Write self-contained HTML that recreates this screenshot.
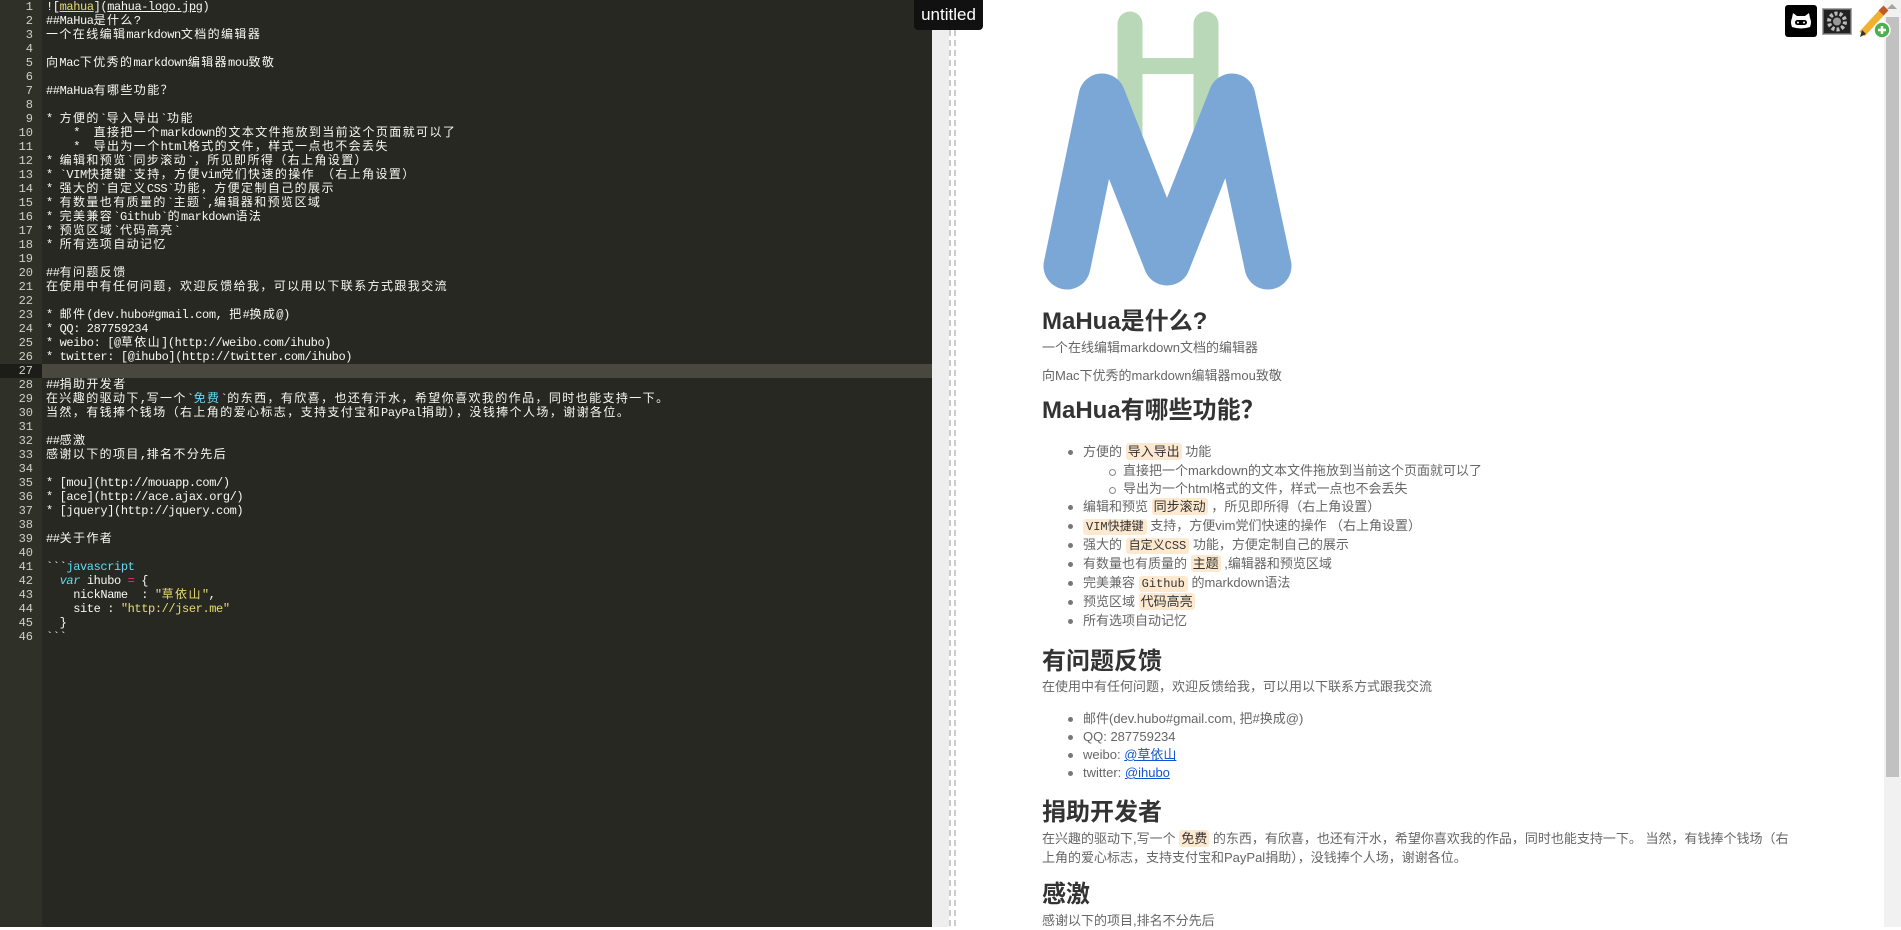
<!DOCTYPE html>
<html><head><meta charset="utf-8"><style>
*{margin:0;padding:0;box-sizing:border-box}
html,body{width:1901px;height:927px;overflow:hidden;background:#fff}
#ed{position:absolute;left:0;top:0;width:932px;height:927px;background:#272822}
#gut{position:absolute;left:0;top:0;width:42px;height:927px;background:#2f3129}
#nums{position:absolute;left:0;top:0;width:42px;}
#nums div{height:14px;text-align:right;padding-right:9px;color:#d0d0c8;font:12px/14px "Liberation Mono",monospace}
#code{position:absolute;left:46px;top:0;width:880px;font:12px/14px "Liberation Mono","Noto Sans CJK SC",monospace;color:#f8f8f2;letter-spacing:-0.4px}
#code div{height:14px;white-space:pre;overflow:hidden}
#code b{font-weight:normal;letter-spacing:1.4px}
.act{position:absolute;left:42px;top:364px;width:890px;height:14px;background:#49483e}
.actg{position:absolute;left:0;top:364px;width:42px;height:14px;background:#1c1d19}
.y{color:#e6db74}.u{text-decoration:underline}.c{color:#66d9ef}.p{color:#f92672}
#strip{position:absolute;left:932px;top:0;width:17px;height:927px;background:#eeeeee}
.dash{position:absolute;top:0;width:2px;height:927px;background:repeating-linear-gradient(#ccc 0px,#ccc 6px,#fff 6px,#fff 10px)}
#tab{position:absolute;left:914px;top:0;width:69px;height:30px;background:#111;border-radius:0 0 4px 4px;color:#fff;font:17px/30px "Liberation Sans",sans-serif;text-align:center}
#pv{position:absolute;left:1042px;top:0;width:780px;height:927px;font-family:"Liberation Sans","Noto Sans CJK SC",sans-serif;color:#666}
#pv h2{position:absolute;left:0;font-size:24px;line-height:28px;color:#333;font-weight:bold;white-space:nowrap}
#pv .t{position:absolute;left:0;font-size:13px;line-height:19px;white-space:nowrap}
#pv .li{position:absolute;font-size:13px;line-height:19px;white-space:nowrap}
.li:before{content:"";position:absolute;left:-15px;top:8px;width:5px;height:5px;border-radius:50%;background:#777}
.li.o:before{background:none;border:1px solid #888;left:-14px}
code{font-family:"Liberation Mono","Noto Sans CJK SC",monospace;font-size:12px;background:#fde9cf;color:#333;padding:1px 3px;border-radius:3px}
.hl{background:#fde9cf;color:#333;padding:1px 2px;border-radius:3px}
a{color:#1155cc;text-decoration:underline}
#sb{position:absolute;left:1884px;top:0;width:17px;height:927px;background:#f1f1f1}
#thumb{position:absolute;left:1886px;top:17px;width:13px;height:760px;background:#c1c1c1}
</style></head><body>
<div id="ed">
<div id="gut"></div>
<div class="actg"></div><div class="act"></div>
<div id="nums"><div>1</div><div>2</div><div>3</div><div>4</div><div>5</div><div>6</div><div>7</div><div>8</div><div>9</div><div>10</div><div>11</div><div>12</div><div>13</div><div>14</div><div>15</div><div>16</div><div>17</div><div>18</div><div>19</div><div>20</div><div>21</div><div>22</div><div>23</div><div>24</div><div>25</div><div>26</div><div>27</div><div>28</div><div>29</div><div>30</div><div>31</div><div>32</div><div>33</div><div>34</div><div>35</div><div>36</div><div>37</div><div>38</div><div>39</div><div>40</div><div>41</div><div>42</div><div>43</div><div>44</div><div>45</div><div>46</div></div>
<div id="code">
<div>![<span class="y u">mahua</span>](<span class="u">mahua-logo.jpg</span>)</div>
<div>##MaHua<b>是什么</b>?</div>
<div><b>一个在线编辑</b>markdown<b>文档的编辑器</b></div>
<div>&nbsp;</div>
<div><b>向</b>Mac<b>下优秀的</b>markdown<b>编辑器</b>mou<b>致敬</b></div>
<div>&nbsp;</div>
<div>##MaHua<b>有哪些功能？</b></div>
<div>&nbsp;</div>
<div>* <b>方便的</b>`<b>导入导出</b>`<b>功能</b></div>
<div>    *  <b>直接把一个</b>markdown<b>的文本文件拖放到当前这个页面就可以了</b></div>
<div>    *  <b>导出为一个</b>html<b>格式的文件，样式一点也不会丢失</b></div>
<div>* <b>编辑和预览</b>`<b>同步滚动</b>`<b>，所见即所得（右上角设置）</b></div>
<div>* `VIM<b>快捷键</b>`<b>支持，方便</b>vim<b>党们快速的操作</b> <b>（右上角设置）</b></div>
<div>* <b>强大的</b>`<b>自定义</b>CSS`<b>功能，方便定制自己的展示</b></div>
<div>* <b>有数量也有质量的</b>`<b>主题</b>`,<b>编辑器和预览区域</b></div>
<div>* <b>完美兼容</b>`Github`<b>的</b>markdown<b>语法</b></div>
<div>* <b>预览区域</b>`<b>代码高亮</b>`</div>
<div>* <b>所有选项自动记忆</b></div>
<div>&nbsp;</div>
<div>##<b>有问题反馈</b></div>
<div><b>在使用中有任何问题，欢迎反馈给我，可以用以下联系方式跟我交流</b></div>
<div>&nbsp;</div>
<div>* <b>邮件</b>(dev.hubo#gmail.com, <b>把</b>#<b>换成</b>@)</div>
<div>* QQ: 287759234</div>
<div>* weibo: [@<b>草依山</b>](http://weibo.com/ihubo)</div>
<div>* twitter: [@ihubo](http://twitter.com/ihubo)</div>
<div>&nbsp;</div>
<div>##<b>捐助开发者</b></div>
<div><b>在兴趣的驱动下</b>,<b>写一个</b>`<span class="c"><b>免费</b></span>`<b>的东西，有欣喜，也还有汗水，希望你喜欢我的作品，同时也能支持一下。</b></div>
<div><b>当然，有钱捧个钱场（右上角的爱心标志，支持支付宝和</b>PayPal<b>捐助），没钱捧个人场，谢谢各位。</b></div>
<div>&nbsp;</div>
<div>##<b>感激</b></div>
<div><b>感谢以下的项目</b>,<b>排名不分先后</b></div>
<div>&nbsp;</div>
<div>* [mou](http://mouapp.com/)</div>
<div>* [ace](http://ace.ajax.org/)</div>
<div>* [jquery](http://jquery.com)</div>
<div>&nbsp;</div>
<div>##<b>关于作者</b></div>
<div>&nbsp;</div>
<div>&#96;&#96;&#96;<span class="c">javascript</span></div>
<div>  <span class="c"><i>var</i></span> ihubo <span class="p">=</span> {</div>
<div>    nickName  : <span class="y">"<b>草依山</b>"</span>,</div>
<div>    site : <span class="y">"http://jser.me"</span></div>
<div>  }</div>
<div>&#96;&#96;&#96;</div>
</div>
</div>
<div id="strip"></div>
<div class="dash" style="left:949px"></div>
<div class="dash" style="left:954px"></div>
<div id="tab">untitled</div>

<svg style="position:absolute;left:1000px;top:0" width="320" height="300" viewBox="1000 0 320 300">
<g stroke="#b9d8b7" stroke-width="25" stroke-linecap="round" fill="none">
<line x1="1130" y1="24" x2="1130" y2="140"/><line x1="1206" y1="24" x2="1206" y2="140"/>
</g>
<rect x="1130" y="58" width="76" height="16" fill="#b9d8b7"/>
<polyline points="1067,266 1102,97 1167,262 1232,97 1268,266" fill="none" stroke="#7ba7d7" stroke-width="47" stroke-linecap="round" stroke-linejoin="round"/>
</svg>

<div id="pv">
<h2 style="top:308px">MaHua是什么?</h2>
<div class="t" style="top:338px">一个在线编辑markdown文档的编辑器</div>
<div class="t" style="top:366px">向Mac下优秀的markdown编辑器mou致敬</div>
<h2 style="top:397px">MaHua有哪些功能？</h2>
<div class="li" style="left:41px;top:442px">方便的 <span class="hl">导入导出</span> 功能</div>
<div class="li o" style="left:81px;top:461px">直接把一个markdown的文本文件拖放到当前这个页面就可以了</div>
<div class="li o" style="left:81px;top:479px">导出为一个html格式的文件，样式一点也不会丢失</div>
<div class="li" style="left:41px;top:497px">编辑和预览 <span class="hl">同步滚动</span> ，所见即所得（右上角设置）</div>
<div class="li" style="left:41px;top:516px"><code>VIM快捷键</code> 支持，方便vim党们快速的操作 （右上角设置）</div>
<div class="li" style="left:41px;top:535px">强大的 <code>自定义CSS</code> 功能，方便定制自己的展示</div>
<div class="li" style="left:41px;top:554px">有数量也有质量的 <span class="hl">主题</span> ,编辑器和预览区域</div>
<div class="li" style="left:41px;top:573px">完美兼容 <code>Github</code> 的markdown语法</div>
<div class="li" style="left:41px;top:592px">预览区域 <span class="hl">代码高亮</span></div>
<div class="li" style="left:41px;top:611px">所有选项自动记忆</div>
<h2 style="top:648px">有问题反馈</h2>
<div class="t" style="top:677px">在使用中有任何问题，欢迎反馈给我，可以用以下联系方式跟我交流</div>
<div class="li" style="left:41px;top:709px">邮件(dev.hubo#gmail.com, 把#换成@)</div>
<div class="li" style="left:41px;top:727px">QQ: 287759234</div>
<div class="li" style="left:41px;top:745px">weibo: <a>@草依山</a></div>
<div class="li" style="left:41px;top:763px">twitter: <a>@ihubo</a></div>
<h2 style="top:799px">捐助开发者</h2>
<div class="t" style="top:829px;white-space:normal;width:750px">在兴趣的驱动下,写一个 <span class="hl">免费</span> 的东西，有欣喜，也还有汗水，希望你喜欢我的作品，同时也能支持一下。 当然，有钱捧个钱场（右上角的爱心标志，支持支付宝和PayPal捐助），没钱捧个人场，谢谢各位。</div>
<h2 style="top:881px">感激</h2>
<div class="t" style="top:911px">感谢以下的项目,排名不分先后</div>
</div>

<div id="sb"></div><div id="thumb"></div>
<div style="position:absolute;left:1887px;top:4px;width:0;height:0;border-left:5px solid transparent;border-right:5px solid transparent;border-bottom:5px solid #a3a3a3"></div>
<div style="position:absolute;left:1785px;top:5px;width:32px;height:32px;background:#000;border-radius:3px"></div>
<svg style="position:absolute;left:1785px;top:5px" width="32" height="32"><path d="M7 13 L8 8 L12 11 L20 11 L24 8 L25 13 Q27 17 25 22 Q16 25 7 22 Q5 17 7 13Z" fill="#fff"/><rect x="10" y="15" width="12" height="5" rx="2.5" fill="#000"/><circle cx="13" cy="17.5" r="1" fill="#fff"/><circle cx="19" cy="17.5" r="1" fill="#fff"/></svg>
<svg style="position:absolute;left:1822px;top:8px" width="30" height="27"><rect x="0.5" y="0.5" width="29" height="26" fill="#666" stroke="#aaa"/><rect x="2" y="2" width="26" height="23" fill="#222"/><circle cx="15" cy="13.5" r="8" fill="none" stroke="#bbb" stroke-width="4" stroke-dasharray="3 2"/><circle cx="15" cy="13.5" r="4" fill="#999"/></svg>
<svg style="position:absolute;left:1858px;top:4px" width="34" height="34"><line x1="4" y1="30" x2="26" y2="6" stroke="#f0b030" stroke-width="7"/><line x1="23" y1="9" x2="28" y2="4" stroke="#c05a2a" stroke-width="7"/><path d="M2 33 L4 26 L8 30Z" fill="#333"/><circle cx="24" cy="26" r="8" fill="#4caf50" stroke="#fff" stroke-width="1.5"/><path d="M20 26h8M24 22v8" stroke="#fff" stroke-width="2.5"/></svg>
</body></html>
